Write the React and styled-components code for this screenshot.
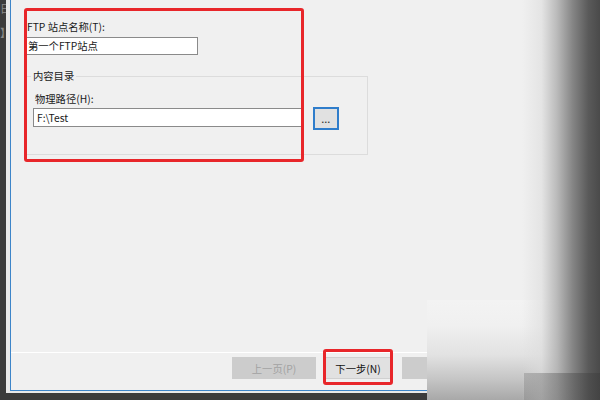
import React from "react";
import styled, { createGlobalStyle } from "styled-components";

const Global = createGlobalStyle`
  html, body { margin: 0; padding: 0; background: #3b3b3b; }
  body { font-family: "Noto Sans CJK SC", "Noto Sans", sans-serif; }
  * { box-sizing: border-box; }
`;

const Screen = styled.div`
  position: relative;
  width: 600px;
  height: 400px;
  overflow: hidden;
  display: flex;
  align-items: flex-start;
  background: #3b3b3b;
`;

const Sidebar = styled.div`
  width: 6px;
  height: 393px;
  overflow: hidden;
  display: flex;
  flex-direction: column;
  align-items: flex-end;
  padding-top: 1px;
  gap: 10px;
  font-size: 11px;
  color: #8a8a8a;
  line-height: 14px;
`;

const Glyph = styled.span`
  display: block;
  white-space: nowrap;
  margin-right: -5px;
`;

const Frame = styled.div`
  flex: 1;
  height: 393px;
  background: #e8e8e8;
  padding: 0 0 2px 4px;
  display: flex;
`;

const Dialog = styled.div`
  flex: 1;
  display: flex;
  flex-direction: column;
  background: #f0f0f0;
  border-left: 1px solid #3d85c9;
  border-bottom: 1px solid #3d85c9;
  color: #1a1a1a;
  font-size: 10.3px;
`;

const Content = styled.div`
  position: relative;
  flex: 1;
  padding: 20px 0 0 15px;
`;

const Highlight = styled.div`
  position: absolute;
  left: 13px;
  top: 8px;
  width: 280px;
  height: 154px;
  border: 3px solid #e8262a;
  border-radius: 3px;
  pointer-events: none;
`;

const Label = styled.div`
  height: 14px;
  line-height: 14px;
  padding-left: ${(p) => p.$indent || 1}px;
  margin-top: ${(p) => p.$mt || 0}px;
  white-space: nowrap;
`;

const TextBox = styled.div`
  width: ${(p) => p.$w}px;
  height: ${(p) => p.$h || 18}px;
  margin-top: ${(p) => p.$mt || 0}px;
  background: #ffffff;
  border: 1px solid #8a8a8a;
  padding-left: ${(p) => p.$pl || 1}px;
  line-height: ${(p) => (p.$h || 18) - 2}px;
  white-space: nowrap;
  overflow: hidden;
`;

const Group = styled.fieldset`
  margin: 14px 0 0 0;
  width: 342px;
  height: 86px;
  border: 1px solid #dcdcdc;
  padding: 0 0 0 4px;
`;

const Legend = styled.legend`
  padding: 0 2px;
  font-size: 10.3px;
  line-height: 14px;
`;

const PathRow = styled.div`
  display: flex;
  align-items: flex-start;
  margin-top: 2px;
  gap: 10px;
  margin-left: 2px;
`;

const BrowseButton = styled.div`
  width: 26px;
  height: 23px;
  margin-top: -1px;
  background: #e1e1e1;
  border: 2px solid #2f7dcb;
  display: flex;
  align-items: center;
  justify-content: center;
  padding-top: 3px;
  font-family: "Liberation Sans", sans-serif;
  font-size: 9px;
  font-weight: bold;
  line-height: 1;
  color: #333;
  letter-spacing: 0.5px;
`;

const Footer = styled.div`
  border-top: 1px solid #ffffff;
  height: 38px;
  display: flex;
  align-items: flex-start;
  padding: 4px 0 0 221px;
`;

const Button = styled.div`
  position: relative;
  width: ${(p) => p.$w}px;
  height: 22px;
  margin-left: ${(p) => p.$ml || 0}px;
  background: ${(p) => (p.$disabled ? "#cccccc" : "#e1e1e1")};
  border: 1px solid ${(p) => (p.$disabled ? "#cccccc" : "#d0d0d0")};
  color: ${(p) => (p.$disabled ? "#a2a2a2" : "#111")};
  font-size: 10.3px;
  display: flex;
  align-items: center;
  justify-content: center;
  white-space: nowrap;
`;

const ButtonMark = styled.div`
  position: absolute;
  left: -3px;
  top: -9px;
  right: -3px;
  bottom: -7px;
  border: 3px solid #e8262a;
  border-radius: 3px;
`;

const Patch = styled.div`
  position: absolute;
  left: 427px;
  top: 300px;
  right: 0;
  bottom: 0;
  background: linear-gradient(
    to bottom,
    #f3f3f3 0%,
    #f0f0f0 25%,
    #e2e2e2 55%,
    #c4c4c4 80%,
    #a8a8a8 100%
  );
`;

const EdgeFade = styled.div`
  position: absolute;
  top: 0;
  right: 0;
  bottom: 0;
  width: 78px;
  background: linear-gradient(
    to right,
    rgba(240, 240, 240, 0) 0%,
    rgba(220, 220, 220, 0.6) 25%,
    rgba(180, 180, 180, 0.9) 45%,
    #858585 65%,
    #5a5a5a 85%,
    #4a4a4a 100%
  );
`;

const CornerShade = styled.div`
  position: absolute;
  left: 524px;
  top: 373px;
  right: 0;
  bottom: 0;
  background: linear-gradient(to right, rgba(120, 120, 120, 0.35), rgba(60, 60, 60, 0.5));
`;

export default function App() {
  return (
    <>
      <Global />
      <Screen>
        <Sidebar>
          <Glyph>日</Glyph>
          <Glyph>】</Glyph>
        </Sidebar>
        <Frame>
          <Dialog>
            <Content>
              <Label>FTP 站点名称(T):</Label>
              <TextBox $w={172} $mt={3}>第一个FTP站点</TextBox>
              <Group>
                <Legend>内容目录</Legend>
                <Label $indent={4} $mt={9}>物理路径(H):</Label>
                <PathRow>
                  <TextBox $w={270} $h={19} $pl={3}>F:\Test</TextBox>
                  <BrowseButton>...</BrowseButton>
                </PathRow>
              </Group>
              <Highlight />
            </Content>
            <Footer>
              <Button $w={84} $disabled>上一页(P)</Button>
              <Button $w={66} $ml={9}>
                下一步(N)
                <ButtonMark />
              </Button>
              <Button $w={84} $ml={11} $disabled>完成</Button>
            </Footer>
          </Dialog>
        </Frame>
        <Patch />
        <EdgeFade />
        <CornerShade />
      </Screen>
    </>
  );
}
